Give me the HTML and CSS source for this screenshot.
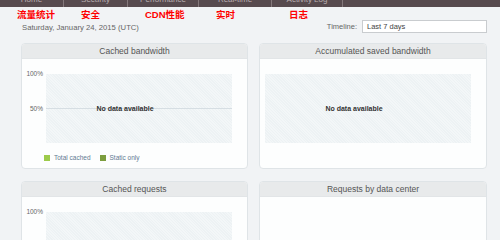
FILE: index.html
```html
<!DOCTYPE html>
<html lang="en">
<head>
    <meta charset="UTF-8">
    <meta name="viewport" content="width=device-width, initial-scale=1.0">
    <title>Analytics</title>
    <link rel="stylesheet" href="styles.css">
</head>
<body>
    <div class="topnav">
        <a class="nav-item w1">Home</a>
        <a class="nav-item w2">Security</a>
        <a class="nav-item w3">Performance</a>
        <a class="nav-item w4">Real-time</a>
        <a class="nav-item w5">Activity Log</a>
    </div>

    <!-- annotation labels under each tab -->
    <div class="tab-notes">
        <span class="note w1">流量统计</span>
        <span class="note w2">安全</span>
        <span class="note w3">CDN性能</span>
        <span class="note w4">实时</span>
        <span class="note w5">日志</span>
    </div>

    <div class="toolbar">
        <span class="date">Saturday, January 24, 2015 (UTC)</span>
        <label class="timeline">
            Timeline:
            <span class="select-box">Last 7 days</span>
        </label>
    </div>

    <div class="cards">
        <div class="card">
            <div class="card-header">Cached bandwidth</div>
            <div class="card-body">
                <div class="chart-row">
                    <div class="y-axis">
                        <span>100%</span>
                        <span>50%</span>
                    </div>
                    <div class="chart with-grid">
                        <span class="no-data">No data available</span>
                    </div>
                </div>
                <div class="legend">
                    <span class="swatch total"></span>Total cached
                    <span class="swatch static"></span>Static only
                </div>
            </div>
        </div>

        <div class="card">
            <div class="card-header">Accumulated saved bandwidth</div>
            <div class="card-body">
                <div class="chart-row plain">
                    <div class="chart">
                        <span class="no-data">No data available</span>
                    </div>
                </div>
            </div>
        </div>

        <div class="card">
            <div class="card-header">Cached requests</div>
            <div class="card-body">
                <div class="chart-row">
                    <div class="y-axis">
                        <span>100%</span>
                        <span>50%</span>
                    </div>
                    <div class="chart with-grid"></div>
                </div>
            </div>
        </div>

        <div class="card">
            <div class="card-header">Requests by data center</div>
            <div class="card-body"></div>
        </div>
    </div>
</body>
</html>
```

FILE: styles.css
```css
body {
    font-family: 'Liberation Sans', Arial, sans-serif;
    background-color: #f1f3f5;
    margin: 0;
    padding: 0;
    color: #555;
}
.topnav {
    height: 7px;
    background-color: #574a4e;
    display: flex;
    overflow: hidden;
}
.nav-item {
    border-right: 1px solid #83777a;
    color: #b9aeb1;
    font-size: 8px;
    line-height: 8px;
    margin-top: -4px;
    text-align: center;
    box-sizing: border-box;
}
.w1 { width: 64px; }
.w2 { width: 64px; }
.w3 { width: 71px; }
.w4 { width: 73px; }
.w5 { width: 71px; }
.tab-notes {
    display: flex;
    height: 13px;
}
.note {
    color: #ff0000;
    font-weight: bold;
    font-size: 9.5px;
    line-height: 16px;
    padding-left: 17px;
    box-sizing: border-box;
    font-family: 'Liberation Sans', 'Noto Sans CJK SC', sans-serif;
}
.toolbar {
    display: flex;
    justify-content: space-between;
    align-items: center;
    height: 13px;
    padding: 0 13px 0 22px;
}
.date {
    font-size: 7.7px;
    color: #666;
    margin-top: 1px;
}
.timeline {
    font-size: 7.5px;
    color: #666;
    display: flex;
    align-items: center;
}
.select-box {
    width: 125px;
    height: 13px;
    box-sizing: border-box;
    margin-left: 5px;
    padding-left: 4px;
    background-color: #fff;
    border: 1px solid #c9cccf;
    color: #444;
    line-height: 11px;
}
.cards {
    display: grid;
    grid-template-columns: 227px 228px;
    column-gap: 11px;
    row-gap: 12px;
    padding: 10px 13px 0 21px;
}
.card {
    background-color: #fdfefe;
    border: 1px solid #dfe4e7;
    border-radius: 4px;
    height: 126px;
    box-sizing: border-box;
    overflow: hidden;
}
.card-header {
    background-color: #e8eaeb;
    border-bottom: 1px solid #e2e5e7;
    height: 14px;
    line-height: 14px;
    text-align: center;
    font-size: 8.5px;
    color: #555;
}
.card-body {
    padding-top: 15px;
}
.chart-row {
    display: flex;
    height: 69px;
    padding-right: 15px;
}
.chart-row.plain {
    padding-left: 5px;
}
.y-axis {
    width: 24px;
    position: relative;
    font-size: 6.5px;
    color: #666;
}
.y-axis span {
    position: absolute;
    right: 3px;
    line-height: 8px;
}
.y-axis span:first-child { top: -4px; }
.y-axis span:last-child { top: 31px; }
.chart {
    flex: 1;
    display: flex;
    align-items: center;
    justify-content: center;
    padding-right: 28px;
    background-color: #edf2f4;
    background-image: repeating-linear-gradient(45deg, rgba(255,255,255,0.35) 0 1px, transparent 1px 2px);
}
.chart.with-grid {
    background-image:
        linear-gradient(#d6dee3, #d6dee3),
        repeating-linear-gradient(45deg, rgba(255,255,255,0.35) 0 1px, transparent 1px 2px);
    background-size: 100% 1px, auto;
    background-position: 0 34px, 0 0;
    background-repeat: no-repeat, repeat;
}
.no-data {
    font-size: 7px;
    font-weight: bold;
    color: #333;
}
.legend {
    display: flex;
    align-items: center;
    font-size: 6.5px;
    color: #5d7a92;
    padding: 11px 0 0 22px;
}
.swatch {
    width: 6px;
    height: 6px;
    margin-right: 4px;
}
.swatch.total { background-color: #9dcb4b; }
.swatch.static {
    background-color: #7c9d3e;
    margin-left: 9px;
}
```
